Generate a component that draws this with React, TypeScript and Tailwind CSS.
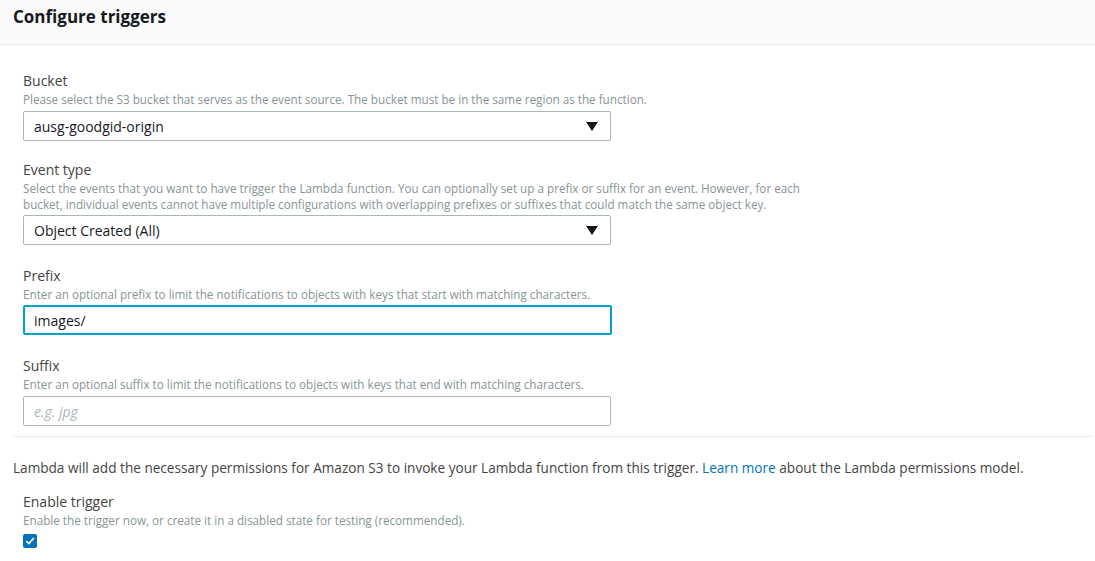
import React from "react";

const font = { fontFamily: '"Open Sans", "Liberation Sans", sans-serif' };

function Label({ children }: { children: React.ReactNode }) {
  return <div className="text-[14px] leading-[18px] text-[#444444]">{children}</div>;
}
function Desc({ children }: { children: React.ReactNode }) {
  return <div className="mt-[1px] text-[11.7px] leading-[16px] text-[#879596]">{children}</div>;
}

function Select({ value, tight }: { value: string; tight?: boolean }) {
  return (
    <div className={(tight ? "mt-[3px] " : "mt-[4px] ") + "flex h-[30px] w-[588px] items-center justify-between rounded-[2px] border border-[#aab7b8] bg-white pl-[10px] pr-[12px] text-[14px] text-[#16191f]"}>
      <span>{value}</span>
      <svg width="12" height="9" viewBox="0 0 12 9"><path d="M0 0 L12 0 L6 9 Z" fill="#16191f" /></svg>
    </div>
  );
}

export default function App() {
  return (
    <div className="min-h-[561px] w-[1095px] bg-white" style={font}>
      <div className="flex h-[45px] items-center border-b border-[#e5e5e5] bg-[#fafafa] pl-[13px]">
        <h2 className="-mt-[10px] text-[17px] font-bold text-[#16191f]">Configure triggers</h2>
      </div>
      <div className="w-[1092px] pl-[13px]">
        <div className="pl-[10px] pt-[27px]">
          <Label>Bucket</Label>
          <Desc>Please select the S3 bucket that serves as the event source. The bucket must be in the same region as the function.</Desc>
          <Select value="ausg-goodgid-origin" />

          <div className="mt-[20px]">
            <Label>Event type</Label>
            <Desc>
              Select the events that you want to have trigger the Lambda function. You can optionally set up a prefix or suffix for an event. However, for each
              <br />
              bucket, individual events cannot have multiple configurations with overlapping prefixes or suffixes that could match the same object key.
            </Desc>
            <Select value="Object Created (All)" tight />
          </div>

          <div className="mt-[22px]">
            <Label>Prefix</Label>
            <Desc>Enter an optional prefix to limit the notifications to objects with keys that start with matching characters.</Desc>
            <div className="mt-[3px] flex h-[30px] w-[589px] items-center rounded-[2px] border-2 border-[#00a1c9] bg-white pl-[9px] text-[14px] text-[#16191f]">
              images/
            </div>
          </div>

          <div className="mt-[22px]">
            <Label>Suffix</Label>
            <Desc>Enter an optional suffix to limit the notifications to objects with keys that end with matching characters.</Desc>
            <div className="mt-[4px] flex h-[30px] w-[588px] items-center rounded-[2px] border border-[#aab7b8] bg-white pl-[10px] text-[14px] italic text-[#aab7b8]">
              e.g. jpg
            </div>
          </div>
        </div>

        <div className="mt-[10px] border-t border-[#eaeded]" />

        <div className="mt-[22px] text-[13.6px] leading-[18px] text-[#444444]">
          Lambda will add the necessary permissions for Amazon S3 to invoke your Lambda function from this trigger.{" "}
          <span className="text-[#0073bb]">Learn more</span> about the Lambda permissions model.
        </div>

        <div className="mt-[16px] pl-[10px]">
          <Label>Enable trigger</Label>
          <Desc>Enable the trigger now, or create it in a disabled state for testing (recommended).</Desc>
          <div className="mt-[6px] flex h-[14px] w-[14px] items-center justify-center rounded-[2px] bg-[#0073bb]">
            <svg width="10" height="8" viewBox="0 0 10 8">
              <path d="M1.2 4.2 L3.8 6.6 L8.8 1.2" fill="none" stroke="white" strokeWidth="1.8" />
            </svg>
          </div>
        </div>
      </div>
    </div>
  );
}
